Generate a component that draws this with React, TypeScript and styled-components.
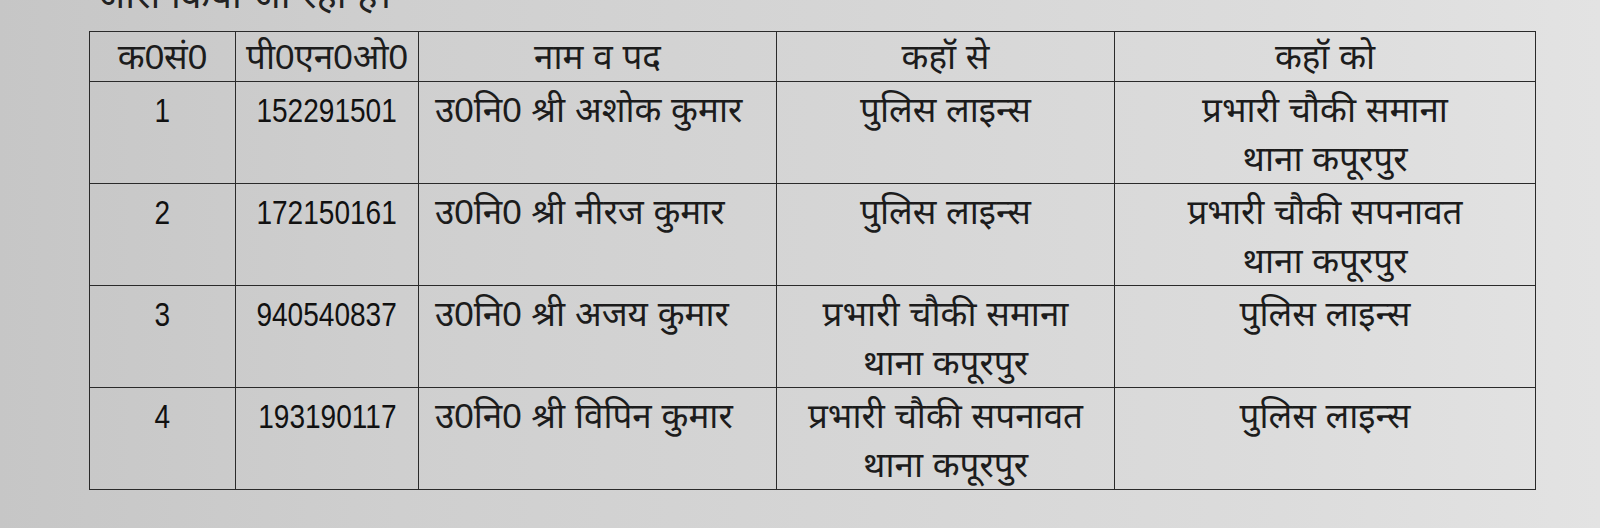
import React from "react";
import styled, { createGlobalStyle } from "styled-components";

const Global = createGlobalStyle`
  html, body { margin: 0; padding: 0; }
  body {
    width: 1600px;
    height: 528px;
    overflow: hidden;
    background: linear-gradient(90deg, #c6c6c6 0%, #cfcfcf 25%, #d6d6d6 55%, #dcdcdc 80%, #e3e3e3 100%);
    font-family: "Liberation Sans", "Noto Sans", sans-serif;
    color: #1c1c1c;
  }
`;

const Page = styled.div`
  display: flex;
  flex-direction: column;
  padding: 0 0 0 89px;
`;

const Intro = styled.div`
  height: 56px;
  margin-top: -25px;
  padding-left: 8px;
  font-size: 38px;
  line-height: 40px;
  color: #222;
  white-space: nowrap;
`;

const Table = styled.table`
  border-collapse: collapse;
  width: 1443px;
  table-layout: fixed;
`;

const Col = styled.col<{ $w: number }>`
  width: ${(p) => p.$w}px;
`;

const Th = styled.th`
  border: 1.8px solid #2a2a2a;
  height: 49px;
  padding: 0;
  font-weight: normal;
  font-size: 35px;
  text-align: center;
  vertical-align: middle;
  line-height: 42px;
  white-space: nowrap;
`;

const Td = styled.td<{ $left?: boolean }>`
  border: 1.8px solid #2a2a2a;
  height: 98px;
  padding: 3px 0 0 ${(p) => (p.$left ? "16px" : "0")};
  font-size: 35px;
  line-height: 49px;
  text-align: ${(p) => (p.$left ? "left" : "center")};
  vertical-align: top;
`;

const Num = styled.span`
  display: inline-block;
  font-size: 33px;
  line-height: 42px;
  color: #111;
  transform: scaleX(0.85);
  transform-origin: center;
`;

const Line = styled.div`
  white-space: nowrap;
`;

type Row = { n: string; pno: string; name: string; from: string[]; to: string[] };

const rows: Row[] = [
  { n: "1", pno: "152291501", name: "उ0नि0 श्री अशोक कुमार", from: ["पुलिस लाइन्स"], to: ["प्रभारी चौकी समाना", "थाना कपूरपुर"] },
  { n: "2", pno: "172150161", name: "उ0नि0 श्री नीरज कुमार", from: ["पुलिस लाइन्स"], to: ["प्रभारी चौकी सपनावत", "थाना कपूरपुर"] },
  { n: "3", pno: "940540837", name: "उ0नि0 श्री अजय कुमार", from: ["प्रभारी चौकी समाना", "थाना कपूरपुर"], to: ["पुलिस लाइन्स"] },
  { n: "4", pno: "193190117", name: "उ0नि0 श्री विपिन कुमार", from: ["प्रभारी चौकी सपनावत", "थाना कपूरपुर"], to: ["पुलिस लाइन्स"] },
];

export default function App() {
  return (
    <>
      <Global />
      <Page>
        <Intro>जारी किया जा रहा है।</Intro>
        <Table>
          <colgroup>
            <Col $w={146} />
            <Col $w={183} />
            <Col $w={358} />
            <Col $w={338} />
            <Col $w={421} />
          </colgroup>
          <thead>
            <tr>
              <Th>क0सं0</Th>
              <Th>पी0एन0ओ0</Th>
              <Th>नाम व पद</Th>
              <Th>कहॉ से</Th>
              <Th>कहॉ को</Th>
            </tr>
          </thead>
          <tbody>
            {rows.map((r) => (
              <tr key={r.n}>
                <Td>
                  <Num>{r.n}</Num>
                </Td>
                <Td>
                  <Num>{r.pno}</Num>
                </Td>
                <Td $left>{r.name}</Td>
                <Td>
                  {r.from.map((l) => (
                    <Line key={l}>{l}</Line>
                  ))}
                </Td>
                <Td>
                  {r.to.map((l) => (
                    <Line key={l}>{l}</Line>
                  ))}
                </Td>
              </tr>
            ))}
          </tbody>
        </Table>
      </Page>
    </>
  );
}
